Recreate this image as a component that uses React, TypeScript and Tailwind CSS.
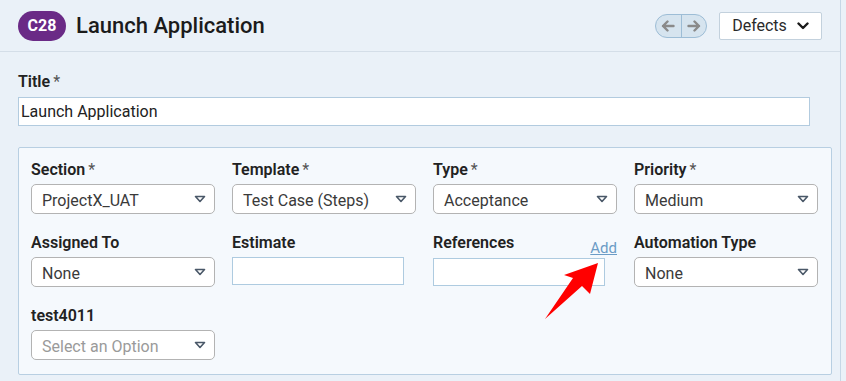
import React from "react";

function Tri() {
  return (
    <svg width="12" height="8" viewBox="0 0 12 8" className="shrink-0">
      <path d="M1.5 1.5 L10.5 1.5 L6 6.5 Z" fill="none" stroke="#4a5868" strokeWidth="1.6" strokeLinejoin="round" />
    </svg>
  );
}

function Label({ text, req }: { text: string; req?: boolean }) {
  return (
    <div className="h-[20px] mb-[4px] text-[16px] leading-[20px] font-semibold text-[#222]">
      {text}
      {req && <span className="ml-[3px] text-[#555] font-normal">*</span>}
    </div>
  );
}

function Select({ value, placeholder }: { value: string; placeholder?: boolean }) {
  return (
    <div className="w-[184px] h-[30px] bg-white border border-[#b3b3b3] rounded-[5px] flex items-center justify-between pl-[10px] pr-[8px]">
      <span className={"pt-[3px] text-[16px] " + (placeholder ? "text-[#9a9a9a]" : "text-[#3a3a3a]")}>{value}</span>
      <Tri />
    </div>
  );
}

function Input() {
  return <div className="w-[172px] h-[28px] bg-white border border-[#aecbe0]" />;
}

export default function App() {
  return (
    <div className="relative w-[846px] h-[381px] overflow-hidden bg-[#eaf1f8] flex" style={{ fontFamily: "Roboto, 'Liberation Sans', sans-serif" }}>
      <div className="w-[841px] h-full border-r border-[#c6d7e6] flex flex-col">
        <div className="h-[52px] border-b border-[#d4dee8] flex items-center pl-[18px] pr-[18px]">
          <div className="h-[30px] w-[48px] rounded-full bg-[#6a2a86] flex items-center justify-center text-white text-[16px] font-bold">C28</div>
          <div className="ml-[10px] text-[22px] font-medium text-[#1b1b1b]">Launch Application</div>
          <div className="ml-auto flex items-center">
            <div className="h-[24px] w-[52px] rounded-full border border-[#9dbdd6] bg-[#d6e4ef] flex">
              <div className="flex-1 flex items-center justify-center border-r border-[#9dbdd6]">
                <svg width="14" height="12" viewBox="0 0 14 12"><path d="M12.5 6 H2 M6.5 1.5 L2 6 L6.5 10.5" fill="none" stroke="#8a8a8a" strokeWidth="2.4" strokeLinecap="round" strokeLinejoin="round" /></svg>
              </div>
              <div className="flex-1 flex items-center justify-center">
                <svg width="14" height="12" viewBox="0 0 14 12"><path d="M1.5 6 H12 M7.5 1.5 L12 6 L7.5 10.5" fill="none" stroke="#8a8a8a" strokeWidth="2.4" strokeLinecap="round" strokeLinejoin="round" /></svg>
              </div>
            </div>
            <div className="ml-[12px] h-[28px] w-[103px] bg-white border border-[#c3d1dd] rounded-[2px] flex items-center justify-center gap-[10px] text-[16px] text-[#2a2a2a]">
              <span>Defects</span>
              <svg width="12" height="8" viewBox="0 0 12 8"><path d="M1.5 1.5 L6 6 L10.5 1.5" fill="none" stroke="#1a1a1a" strokeWidth="2.4" strokeLinecap="round" strokeLinejoin="round" /></svg>
            </div>
          </div>
        </div>
        <div className="pl-[18px] pt-[20px]">
          <div className="h-[20px] mb-[5px] text-[16px] leading-[20px] font-semibold text-[#222]">
            Title<span className="ml-[3px] text-[#555] font-normal">*</span>
          </div>
          <div className="w-[792px] h-[29px] bg-white border border-[#b2cbdf] flex items-center pl-[2px] pt-[1px] text-[16px] text-[#222]">Launch Application</div>
          <div className="mt-[21px] w-[814px] h-[228px] bg-[#f5f9fd] border border-[#b8cfe2] rounded-[2px] pt-[12px] pl-[12px]">
            <div className="grid grid-cols-[184px_184px_184px_184px] gap-x-[17px] gap-y-[19px]">
              <div><Label text="Section" req /><Select value="ProjectX_UAT" /></div>
              <div><Label text="Template" req /><Select value="Test Case (Steps)" /></div>
              <div><Label text="Type" req /><Select value="Acceptance" /></div>
              <div><Label text="Priority" req /><Select value="Medium" /></div>
              <div><Label text="Assigned To" /><Select value="None" /></div>
              <div><Label text="Estimate" /><Input /></div>
              <div>
                <div className="h-[20px] mb-[4px] flex justify-between items-end">
                  <span className="text-[16px] leading-[20px] font-semibold text-[#222]">References</span>
                  <span className="text-[15px] leading-[18px] text-[#6c9cc6] underline translate-y-[4px]">Add</span>
                </div>
                <div className="pt-[1px]"><Input /></div>
              </div>
              <div><Label text="Automation Type" /><Select value="None" /></div>
              <div><Label text="test4011" /><Select value="Select an Option" placeholder /></div>
            </div>
          </div>
        </div>
      </div>
      <svg className="absolute left-0 top-0 pointer-events-none" width="846" height="381">
        <polygon points="598,263 590,294 582,286 545,319 573,278 564,275" fill="#ff0000" />
      </svg>
    </div>
  );
}
